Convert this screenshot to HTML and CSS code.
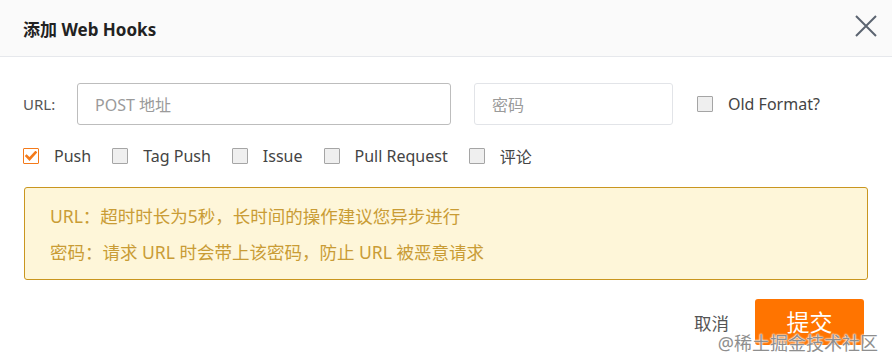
FILE: index.html
```html
<!DOCTYPE html>
<html lang="zh-CN">
<head>
<meta charset="utf-8">
<title>添加 Web Hooks</title>
<link rel="stylesheet" href="styles.css">
</head>
<body>
<div class="dialog">
  <div class="header">
    <span class="title">添加 Web Hooks</span>
    <svg class="close" width="22" height="22" viewBox="0 0 22 22"><path d="M1 1L21 21M21 1L1 21" stroke="#5b6470" stroke-width="2" fill="none"/></svg>
  </div>
  <div class="content">
    <div class="row-fields">
      <label class="field-label">URL:</label>
      <div class="input input-url"><span class="ph">POST 地址</span></div>
      <div class="input input-pw"><span class="ph">密码</span></div>
      <label class="check"><span class="box"></span><span class="check-text">Old Format?</span></label>
    </div>
    <div class="row-checks">
      <label class="check"><span class="box checked"><svg width="12" height="10" viewBox="0 0 12 10"><path d="M1.5 5L4.5 8L10.5 1.5" stroke="#f47a1a" stroke-width="2.6" fill="none" stroke-linecap="square"/></svg></span><span class="check-text">Push</span></label>
      <label class="check"><span class="box"></span><span class="check-text">Tag Push</span></label>
      <label class="check"><span class="box"></span><span class="check-text">Issue</span></label>
      <label class="check"><span class="box"></span><span class="check-text">Pull Request</span></label>
      <label class="check"><span class="box"></span><span class="check-text">评论</span></label>
    </div>
    <div class="alert">
      <p>URL：超时时长为5秒，长时间的操作建议您异步进行</p>
      <p>密码：请求 URL 时会带上该密码，防止 URL 被恶意请求</p>
    </div>
    <div class="footer">
      <span class="cancel">取消</span>
      <span class="submit">提交</span>
    </div>
  </div>
  <div class="watermark">@稀土掘金技术社区</div>
</div>
</body>
</html>
```
FILE: styles.css
```css
* { box-sizing: border-box; }
html, body { margin: 0; padding: 0; background: #fff; }
body {
  font-family: "Noto Sans", "Noto Sans CJK SC", sans-serif;
  width: 892px;
  height: 363px;
  overflow: hidden;
}
.dialog { position: relative; width: 892px; height: 363px; }
.header {
  height: 57px;
  background: #fafafa;
  border-bottom: 1px solid #e6e8ec;
  display: flex;
  align-items: center;
  justify-content: space-between;
  padding: 0 15px 0 23px;
}
.title { font-size: 17px; font-weight: bold; color: #222; }
.close { display: block; margin-top: -4px; }
.content { padding: 26px 24px 0 23px; }
.row-fields { display: flex; align-items: center; height: 42px; }
.field-label { width: 54px; font-size: 15px; color: #555; }
.input {
  height: 42px;
  border: 1px solid #bdbdbd;
  border-radius: 3px;
  display: flex;
  align-items: center;
  padding-left: 17px;
}
.input-url { width: 374px; margin-right: 23px; }
.input-pw { width: 199px; border-color: #e2e4e8; margin-right: 24px; }
.ph { font-size: 16px; color: #9a9a9a; }
.check { display: flex; align-items: center; margin-right: 21px; }
.box {
  width: 16px; height: 16px;
  border: 1px solid #a5a5a5;
  background: #efefef;
  border-radius: 1px;
  display: flex; align-items: center; justify-content: center;
  margin-right: 15px;
}
.box.checked { border-color: #f47a1a; background: #fff; }
.check-text { font-size: 16px; color: #444; }
.row-checks { display: flex; align-items: center; margin-top: 20px; height: 22px; }
.alert {
  margin-top: 20px;
  margin-left: 1px;
  border: 1px solid #c9961f;
  border-radius: 3px;
  background: #fef6d9;
  padding: 10px 25px 9px;
  height: 93px;
}
.alert p { margin: 0; line-height: 36px; font-size: 17.5px; color: #c99c35; }
.footer {
  display: flex;
  justify-content: flex-end;
  align-items: center;
  margin-top: 19px;
  padding-right: 4px;
}
.cancel { font-size: 17.5px; color: #555; margin-right: 26px; }
.submit {
  width: 109px; height: 46px;
  background: #ff7400;
  color: #fff;
  font-size: 23px;
  border-radius: 3px;
  display: flex; align-items: center; justify-content: center;
  padding-bottom: 3px;
}
.watermark {
  position: absolute;
  right: 14px;
  bottom: 8px;
  font-size: 18px;
  color: #8e8e8e;
  text-shadow: 0 0 2px #fff, 0 0 2px #fff, 0 0 1px #fff;
}
```
